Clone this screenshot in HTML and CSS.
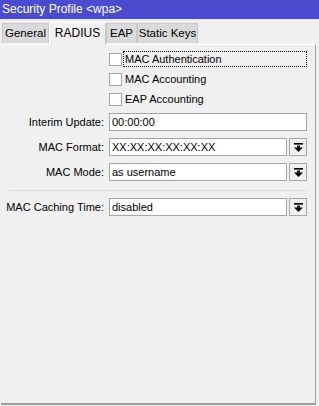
FILE: index.html
```html
<!DOCTYPE html>
<html lang="en">
<head>
  <meta charset="UTF-8">
  <title>Security Profile &lt;wpa&gt;</title>
  <link rel="stylesheet" href="styles.css">
</head>
<body>
  <div class="win">
    <div class="title">Security Profile &lt;wpa&gt;</div>
    <div class="tabs">
      <span class="tab t-general">General</span>
      <span class="tab t-radius current">RADIUS</span>
      <span class="tab t-eap">EAP</span>
      <span class="tab t-keys">Static Keys</span>
    </div>
    <div class="panel">
      <div class="row check">
        <span class="label"></span>
        <span class="box"></span>
        <span class="ctext focus">MAC Authentication</span>
      </div>
      <div class="row check">
        <span class="label"></span>
        <span class="box"></span>
        <span class="ctext">MAC Accounting</span>
      </div>
      <div class="row check">
        <span class="label"></span>
        <span class="box"></span>
        <span class="ctext">EAP Accounting</span>
      </div>
      <div class="row field first">
        <span class="label">Interim Update:</span>
        <span class="input">00:00:00</span>
      </div>
      <div class="row field">
        <span class="label">MAC Format:</span>
        <span class="input">XX:XX:XX:XX:XX:XX</span>
        <span class="drop"><svg width="9" height="9" viewBox="0 0 9 9"><rect x="0" y="0" width="9" height="1.6" fill="#000"/><rect x="3" y="2.6" width="3" height="2" fill="#000"/><polygon points="0,4.4 9,4.4 4.5,9" fill="#000"/></svg></span>
      </div>
      <div class="row field">
        <span class="label">MAC Mode:</span>
        <span class="input">as username</span>
        <span class="drop"><svg width="9" height="9" viewBox="0 0 9 9"><rect x="0" y="0" width="9" height="1.6" fill="#000"/><rect x="3" y="2.6" width="3" height="2" fill="#000"/><polygon points="0,4.4 9,4.4 4.5,9" fill="#000"/></svg></span>
      </div>
      <div class="sep"></div>
      <div class="row field">
        <span class="label">MAC Caching Time:</span>
        <span class="input">disabled</span>
        <span class="drop"><svg width="9" height="9" viewBox="0 0 9 9"><rect x="0" y="0" width="9" height="1.6" fill="#000"/><rect x="3" y="2.6" width="3" height="2" fill="#000"/><polygon points="0,4.4 9,4.4 4.5,9" fill="#000"/></svg></span>
      </div>
    </div>
  </div>
</body>
</html>
```

FILE: styles.css
```css
* {
  margin: 0;
  padding: 0;
  box-sizing: border-box;
}
body {
  width: 319px;
  height: 406px;
  background-color: #f0f0f0;
  font-family: "Liberation Sans", Arial, sans-serif;
  font-size: 11px;
  color: #000;
  overflow: hidden;
}
.win {
  height: 406px;
}
.title {
  height: 19px;
  line-height: 18px;
  padding-left: 2px;
  background-color: #4b4bcf;
  color: #fff;
  font-size: 12px;
}
.tabs {
  display: flex;
  align-items: flex-end;
  height: 25px;
  padding-left: 2px;
}
.tab {
  height: 20px;
  line-height: 19px;
  margin-bottom: 1px;
  border: 1px solid #c8c8c8;
  border-bottom: none;
  background-color: #dadada;
  font-size: 11.5px;
  text-align: center;
  white-space: nowrap;
}
.t-general {
  width: 47px;
}
.t-radius {
  width: 57px;
}
.t-eap {
  width: 31px;
}
.t-keys {
  width: 61px;
}
.tab.current {
  height: 23px;
  line-height: 21px;
  margin-bottom: -1px;
  border-color: #fff #c8c8c8 #fff #fff;
  background-color: #f0f0f0;
  font-size: 12px;
  position: relative;
  z-index: 1;
}
.panel {
  height: 361px;
  margin: 0 3px 0 1px;
  padding: 4px 8px 0 7px;
  border-top: 1px solid #fff;
  border-right: 1px solid #a0a0a0;
  border-bottom: 2px solid #a0a0a0;
}
.row {
  display: flex;
  align-items: center;
}
.row.check {
  height: 20px;
}
.label {
  width: 101px;
  flex: none;
  display: flex;
  justify-content: flex-end;
  padding-right: 5px;
  white-space: nowrap;
}
.box {
  width: 13px;
  height: 13px;
  flex: none;
  border: 1px solid #a6a6a6;
  background-color: #fff;
}
.ctext {
  margin-left: 1px;
  padding: 1px 1px;
  border: 1px dotted transparent;
}
.ctext.focus {
  flex: 1;
  border-color: #000;
}
.row.field {
  height: 18px;
  margin-top: 7px;
}
.row.field.first {
  margin-top: 4px;
}
.input {
  flex: 1;
  height: 18px;
  line-height: 16px;
  padding-left: 2px;
  border: 1px solid #a6a6a6;
  background-color: #fff;
  white-space: nowrap;
  overflow: hidden;
}
.drop {
  width: 18px;
  height: 18px;
  flex: none;
  margin-left: 2px;
  border: 1px solid #a6a6a6;
  background-color: #f0f0f0;
  display: flex;
  align-items: center;
  justify-content: center;
}
.sep {
  height: 1px;
  margin: 9px 0 0 1px;
  background-color: #dcdcdc;
}
```
